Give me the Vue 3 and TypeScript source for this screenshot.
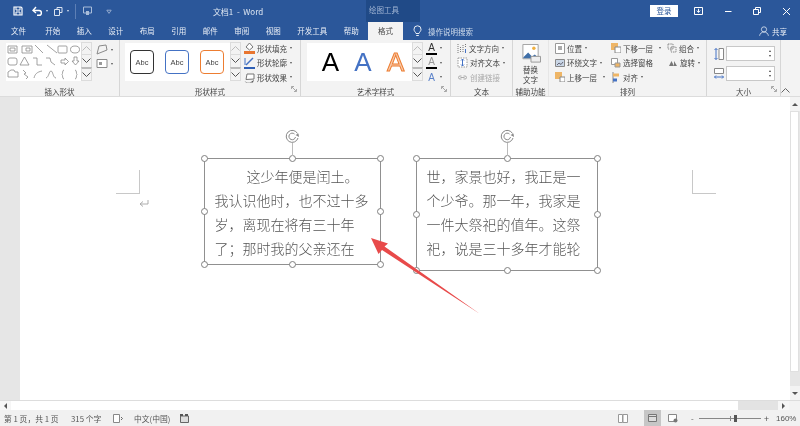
<script setup lang="ts">
const tabs = ["开始", "插入", "设计", "布局", "引用", "邮件", "审阅", "视图", "开发工具", "帮助"];
const abcs = ["dark", "blue", "orange"];
const box1 = ["这少年便是闰土。", "我认识他时，也不过十多", "岁，离现在将有三十年", "了；那时我的父亲还在"];
const box2 = ["世，家景也好，我正是一", "个少爷。那一年，我家是", "一件大祭祀的值年。这祭", "祀，说是三十多年才能轮"];
const scroll = ["up", "down", "more"];
const handles = ["tl", "tc", "tr", "ml", "mr", "bl", "bc", "br"];
</script>

<template>
  <div class="app">
    <header class="titlebar">
      <div class="quick">
        <svg width="10" height="10" viewBox="0 0 10 10"><path d="M1 1h7l1 1v7H1z" fill="none" stroke="#fff" stroke-width="1.2" /><path d="M3 1v3h4V1M3 9V6h4v3" fill="none" stroke="#fff" /></svg>
        <svg class="q-undo" width="11" height="10" viewBox="0 0 11 10"><path d="M2 4.5h5a2.4 2.4 0 0 1 0 4.8H5" fill="none" stroke="#fff" stroke-width="1.4" /><path d="M4 1L1 4.5 4 7" fill="none" stroke="#fff" stroke-width="1.4" /></svg>
        <i class="caret light"></i>
        <svg class="q-redo" width="11" height="11" viewBox="0 0 11 11"><path d="M1.5 3.5h5v6h-5zM4 3.5V1.5h5v5H6.5" fill="none" stroke="#dbe4f1" /></svg>
        <i class="caret light"></i>
        <span class="q-sep"></span>
        <svg class="q-touch" width="9" height="10" viewBox="0 0 9 10"><path d="M.5 1h8v6h-8z" fill="none" stroke="#a9bdd9" /><path d="M3 5h3v4H3z" fill="#a9bdd9" /></svg>
        <svg class="q-more" width="6" height="7" viewBox="0 0 6 7"><path d="M.8 2.2h4.4L3 5.4z" fill="none" stroke="#a9bdd9" stroke-width=".8" /></svg>
      </div>
      <div class="doc-title">文档1&nbsp; -&nbsp; Word</div>
      <div class="context">绘图工具</div>
      <button class="login">登录</button>
      <svg class="win first" width="9" height="8" viewBox="0 0 9 8"><path d="M.5.5h8v7h-8z" fill="none" stroke="#fff" /><path d="M4.5 1.8v3.6M2.8 3.6l1.7 1.8 1.7-1.8" fill="none" stroke="#fff" /></svg>
      <svg class="win" width="8" height="8" viewBox="0 0 8 8"><path d="M1 4.5h6.5" stroke="#fff" /></svg>
      <svg class="win" width="8" height="8" viewBox="0 0 8 8"><path d="M.5 2.5h5v5h-5zM2.5 2.5v-2h5v5h-2" fill="none" stroke="#fff" /></svg>
      <svg class="win" width="9" height="9" viewBox="0 0 9 9"><path d="M1 1l7 7M8 1L1 8" stroke="#fff" /></svg>
    </header>

    <nav class="tabs">
      <span class="tab file">文件</span>
      <span v-for="t in tabs" :key="t" class="tab">{{ t }}</span>
      <span class="tab active">格式</span>
      <svg class="bulb" width="9" height="12" viewBox="0 0 9 12"><path d="M3 8.5C2.6 7 1 6.3 1 4.3a3.5 3.5 0 0 1 7 0C8 6.3 6.4 7 6 8.5zM3.2 10.5h2.6" fill="none" stroke="#fff" stroke-width=".9" /></svg>
      <span class="search">操作说明搜索</span>
      <span class="grow"></span>
      <svg class="person" width="10" height="10" viewBox="0 0 10 10"><circle cx="5" cy="3.4" r="2.6" fill="none" stroke="#dfe7f2" stroke-width=".8" /><path d="M.6 9.8c.4-2.4 2-3.8 4.4-3.8s4 1.4 4.4 3.8" fill="none" stroke="#dfe7f2" stroke-width=".8" /></svg>
      <span class="share">共享</span>
    </nav>

    <section class="ribbon">
      <div class="group g-shapes">
        <div class="body">
          <svg class="gallery-shapes" width="75" height="38" viewBox="0 0 75 38" fill="none" stroke="#8a8a8a" stroke-width=".8">
            <path d="M2 3h9v7H2zM4 5h5v3H4zM16 3h10v7H16zM20 5h4v3h-4zM29 2l8 8M41 2l10 8" />
            <rect x="52" y="3" width="9" height="7" rx="1" /><ellipse cx="69" cy="6.5" rx="4.5" ry="3.5" />
            <rect x="2" y="15" width="9" height="7" rx="2" /><path d="M14 22l4.500-8 4.500 8zM27 15h4v7h5M40 15h4l1 4 4 3M55 17h4v-2l3.500 3.500-3.500 3.500v-2h-4zM68 14h3v4h2l-3.500 4-3.500-4h2z" />
            <path d="M2 34v-5l3-2h3l1 2h3v5zM17 27l3 3-2 1 4 3-2 2M28 35c1-4 3-6 8-7M40 35c3-1 3-7 5-7s2 7 5 7M58 27c-2 0-1 4-2 4.500 1 .5 0 4.500 2 4.500M69 27c2 0 1 4 2 4.500-1 .5 0 4.500-2 4.500" />
          </svg>
          <div class="scroller">
            <span v-for="s in scroll" :key="s" class="sbtn" :class="s">
              <svg width="9" height="5" viewBox="0 0 9 5"><path :d="s === 'up' ? 'M.5 4.500L4.500.5l4 4' : 'M.5.5l4 4 4-4'" fill="none" :stroke="s === 'up' ? '#bbb' : '#555'" /></svg>
            </span>
          </div>
          <div class="edit-shape">
            <div class="mini">
              <svg width="12" height="11" viewBox="0 0 12 11"><path d="M1 10l2-8 7-1 1 5-5 2z" fill="none" stroke="#8a8a8a" /></svg><i class="caret"></i>
            </div>
            <div class="mini">
              <svg width="12" height="11" viewBox="0 0 12 11"><path d="M1 1.500h10v8H1z" fill="#fff" stroke="#8a8a8a" /><path d="M3 4h3v3H3z" fill="#999" /></svg><i class="caret"></i>
            </div>
          </div>
        </div>
        <div class="label">插入形状</div>
      </div>

      <div class="group g-styles">
        <div class="body">
          <div class="gallery abc-row">
            <span v-for="a in abcs" :key="a" class="abc" :class="a">Abc</span>
          </div>
          <div class="scroller">
            <span v-for="s in scroll" :key="s" class="sbtn" :class="s">
              <svg width="9" height="5" viewBox="0 0 9 5"><path :d="s === 'up' ? 'M.5 4.500L4.500.5l4 4' : 'M.5.5l4 4 4-4'" fill="none" :stroke="s === 'up' ? '#bbb' : '#555'" /></svg>
            </span>
          </div>
          <div class="cmds styles-cmds">
            <div class="cmd">
              <svg width="11" height="12" viewBox="0 0 11 12"><path d="M5.500 1L9 5 5.500 8 2 5z" fill="#fff" stroke="#777" /><path d="M0 9h11v3H0z" fill="#e8752f" /></svg>
              <span>形状填充</span><i class="caret"></i>
            </div>
            <div class="cmd">
              <svg width="11" height="12" viewBox="0 0 11 12"><path d="M2 8l7-7" stroke="#4472c4" stroke-width="1.500" /><path d="M0 10h11v2H0z" fill="#2f5fb5" /><path d="M1 1v7" stroke="#4472c4" /></svg>
              <span>形状轮廓</span><i class="caret"></i>
            </div>
            <div class="cmd">
              <svg width="11" height="11" viewBox="0 0 11 11"><path d="M2 7.500l1-5.500h7v5z" fill="#fff" stroke="#777" /><path d="M.5 9c2 2 7 2 9.500-1.500l-1 3H2z" fill="#555" /></svg>
              <span>形状效果</span><i class="caret"></i>
            </div>
          </div>
        </div>
        <div class="label">形状样式</div>
        <svg class="launch" width="6" height="6" viewBox="0 0 6 6"><path d="M.5 3V.5H3M1 1l4 4M5.500 3v2.500H3" fill="none" stroke="#888" stroke-width=".7" /></svg>
      </div>

      <div class="group g-art">
        <div class="body">
          <div class="gallery art-row">
            <span class="art black">A</span>
            <span class="art blue">A</span>
            <span class="art orange">A</span>
          </div>
          <div class="scroller">
            <span v-for="s in scroll" :key="s" class="sbtn" :class="s">
              <svg width="9" height="5" viewBox="0 0 9 5"><path :d="s === 'up' ? 'M.5 4.500L4.500.5l4 4' : 'M.5.5l4 4 4-4'" fill="none" :stroke="s === 'up' ? '#bbb' : '#555'" /></svg>
            </span>
          </div>
          <div class="cmds art-cmds">
            <div class="cmd"><span class="a-btn k">A</span><i class="caret"></i></div>
            <div class="cmd"><span class="a-btn o">A</span><i class="caret"></i></div>
            <div class="cmd"><span class="a-btn e">A</span><i class="caret"></i></div>
          </div>
        </div>
        <div class="label">艺术字样式</div>
        <svg class="launch" width="6" height="6" viewBox="0 0 6 6"><path d="M.5 3V.5H3M1 1l4 4M5.500 3v2.500H3" fill="none" stroke="#888" stroke-width=".7" /></svg>
      </div>

      <div class="group g-text">
        <div class="body">
          <div class="cmds">
            <div class="cmd">
              <svg width="10" height="11" viewBox="0 0 10 11"><path d="M1 1v9M3.500 4v6M6 2v8M8.500 1v3" stroke="#777" stroke-dasharray="1 1" /><path d="M8.500 6v4" stroke="#4472c4" /></svg>
              <span>文字方向</span><i class="caret"></i>
            </div>
            <div class="cmd">
              <svg width="11" height="11" viewBox="0 0 11 11"><path d="M1 1h9v9H1z" fill="#fff" stroke="#999" stroke-dasharray="1.500 1" /><path d="M5.500 2v7M4 3.500L5.500 2 7 3.500M4 7.500L5.500 9 7 7.500" fill="none" stroke="#4472c4" /></svg>
              <span>对齐文本</span><i class="caret"></i>
            </div>
            <div class="cmd disabled">
              <svg width="11" height="11" viewBox="0 0 11 11"><path d="M4.500 4H3a1.500 1.500 0 0 0 0 3h1.500M6.500 4H8a1.500 1.500 0 0 1 0 3H6.500M3.500 5.500h4" fill="none" stroke="#aaa" /></svg>
              <span>创建链接</span>
            </div>
          </div>
        </div>
        <div class="label">文本</div>
      </div>

      <div class="group g-alt">
        <div class="body alt-body">
          <svg width="20" height="21" viewBox="0 0 20 21"><path d="M1.500.5h16v15h-16z" fill="#fff" stroke="#a0a0a0" /><path d="M2 14l5-5 4 4 3-2 3 3v1H2z" fill="#3f6fa8" /><circle cx="13" cy="4.500" r="1.800" fill="#f0b040" /><path d="M10 13h10v6H10z" fill="#eee" stroke="#999" /></svg>
          <span class="alt-text">替换<br />文字</span>
        </div>
        <div class="label">辅助功能</div>
      </div>

      <div class="group g-arrange">
        <div class="body arrange">
          <div class="cmds col1">
            <div class="cmd">
              <svg width="10" height="11" viewBox="0 0 10 11"><path d="M.5.5h9v10h-9z" fill="#fff" stroke="#999" /><path d="M3 3h4v4H3z" fill="#aaa" /></svg>
              <span>位置</span><i class="caret"></i>
            </div>
            <div class="cmd">
              <svg width="10" height="10" viewBox="0 0 10 10"><path d="M.5 1.500h9v7h-9z" fill="#c9d6e6" stroke="#888" /><path d="M2 7l2-2 2 1.500L8 4" fill="none" stroke="#667" /></svg>
              <span>环绕文字</span><i class="caret"></i>
            </div>
            <div class="cmd">
              <svg width="10" height="10" viewBox="0 0 10 10"><path d="M0 0h7v7H0z" fill="#eeb566" /><path d="M5 5h5v5H5z" fill="#fff" stroke="#888" /></svg>
              <span>上移一层</span><i class="caret far"></i>
            </div>
          </div>
          <div class="cmds col2">
            <div class="cmd">
              <svg width="10" height="10" viewBox="0 0 10 10"><path d="M0 0h7v7H0z" fill="#eeb566" /><path d="M4 4h6v6H4z" fill="#fff" stroke="#888" /></svg>
              <span>下移一层</span><i class="caret far"></i>
            </div>
            <div class="cmd">
              <svg width="10" height="10" viewBox="0 0 10 10"><path d="M.5.5h6v6h-6z" fill="#fff" stroke="#999" /><path d="M4 5h5v4H4z" fill="#eeb566" stroke="#999" /></svg>
              <span>选择窗格</span>
            </div>
            <div class="cmd">
              <svg width="10" height="11" viewBox="0 0 10 11"><path d="M2 0v11" stroke="#888" /><path d="M2 1.500h6v3H2z" fill="#eeb566" /><path d="M2 6.500h4v3H2z" fill="#4472c4" /></svg>
              <span>对齐</span><i class="caret"></i>
            </div>
          </div>
          <div class="cmds col3">
            <div class="cmd">
              <svg width="10" height="10" viewBox="0 0 10 10"><path d="M1 1h5v5H1zM4 4h5v5H4z" fill="none" stroke="#888" stroke-dasharray="1.500 .8" /></svg>
              <span>组合</span><i class="caret"></i>
            </div>
            <div class="cmd rot">
              <svg width="10" height="9" viewBox="0 0 10 9"><path d="M1 8l2.500-5L6 8zM6 3l3 5H6" fill="#777" /></svg>
              <span>旋转</span><i class="caret"></i>
            </div>
          </div>
        </div>
        <div class="label">排列</div>
      </div>

      <div class="group g-size">
        <div class="body size-body">
          <div class="size-row">
            <svg width="10" height="12" viewBox="0 0 10 12"><path d="M5 .5h4.500v11H5z" fill="#fff" stroke="#888" /><path d="M2 .5v11M.5 2L2 .5 3.500 2M.5 10L2 11.500 3.500 10" fill="none" stroke="#4472c4" /></svg>
            <div class="spin"><span class="arrows"><i class="sup"></i><i class="sdn"></i></span></div>
          </div>
          <div class="size-row">
            <svg width="10" height="12" viewBox="0 0 10 12"><path d="M.5.5h9v5h-9z" fill="#fff" stroke="#888" /><path d="M.5 9h9M2 7.500L.5 9 2 10.500M8 7.500L9.500 9 8 10.500" fill="none" stroke="#4472c4" /></svg>
            <div class="spin"><span class="arrows"><i class="sup"></i><i class="sdn"></i></span></div>
          </div>
        </div>
        <div class="label">大小</div>
        <svg class="launch" width="6" height="6" viewBox="0 0 6 6"><path d="M.5 3V.5H3M1 1l4 4M5.500 3v2.500H3" fill="none" stroke="#888" stroke-width=".7" /></svg>
      </div>

      <svg class="collapse" width="9" height="5" viewBox="0 0 9 5"><path d="M.5 4.500l4-4 4 4" fill="none" stroke="#666" /></svg>
    </section>

    <main class="workspace">
      <div class="gutter"></div>
      <div class="page">
        <i class="crop left"></i>
        <i class="crop right"></i>
        <svg class="para" width="10" height="9" viewBox="0 0 10 9"><path d="M9 1v4H1.500M4 2.500L1 5l3 2.500" fill="none" stroke="#999" stroke-width=".8" /></svg>

        <div class="shape s1">
          <p v-for="(l, i) in box1" :key="l" :class="{ indent: i === 0 }">{{ l }}</p>
          <i v-for="h in handles" :key="h" class="handle" :class="h"></i>
          <i class="stem"></i>
          <svg class="rotate" width="15" height="15" viewBox="0 0 15 15"><path d="M12.500 4.500A6 6 0 1 0 13 9M9.500 5A3.300 3.300 0 1 0 10.500 8" fill="none" stroke="#888" stroke-width="1" /><path d="M10.500 6l3-1.500.5 3.500z" fill="#888" /></svg>
        </div>

        <div class="shape s2">
          <p v-for="l in box2" :key="l">{{ l }}</p>
          <i v-for="h in handles" :key="h" class="handle" :class="h"></i>
          <i class="stem"></i>
          <svg class="rotate" width="15" height="15" viewBox="0 0 15 15"><path d="M12.500 4.500A6 6 0 1 0 13 9M9.500 5A3.300 3.300 0 1 0 10.500 8" fill="none" stroke="#888" stroke-width="1" /><path d="M10.500 6l3-1.500.5 3.500z" fill="#888" /></svg>
        </div>

        <svg class="arrow" width="120" height="90" viewBox="0 0 120 90">
          <path d="M1 1L18 6.500 14.500 9.500 110 77 12 13 8.500 17z" fill="#e84a4a" />
        </svg>
      </div>
      <div class="vscroll">
        <span class="vbtn"><i class="tri-up"></i></span>
        <span class="vthumb"></span>
        <span class="vbtn"><i class="tri-down"></i></span>
      </div>
    </main>

    <div class="hscroll">
      <span class="hbtn"><i class="tri-left"></i></span>
      <span class="hthumb"></span>
      <span class="htrack"></span>
      <span class="hbtn"><i class="tri-right"></i></span>
      <span class="hend"></span>
    </div>

    <footer class="status">
      <span class="st-page">第 1 页，共 1 页</span>
      <span class="st-words">315 个字</span>
      <svg class="st-ic1" width="10" height="9" viewBox="0 0 10 9"><path d="M.5.5h6v8h-6z" fill="#fff" stroke="#888" /><path d="M8 3l1.500 1.500L8 6" fill="none" stroke="#666" /></svg>
      <span class="st-lang">中文(中国)</span>
      <svg class="st-ic2" width="9" height="9" viewBox="0 0 9 9"><path d="M.5 2h8v6.500h-8z" fill="#ddd" stroke="#666" /><path d="M0 0h3v2H0zM5 0h3v2H5z" fill="#555" /></svg>
      <span class="grow"></span>
      <svg class="st-read" width="10" height="9" viewBox="0 0 10 9"><path d="M.5.5h4v8h-4zM5 .5h4.500v8H5z" fill="#fff" stroke="#999" /></svg>
      <span class="st-print"><svg width="9" height="8" viewBox="0 0 9 8"><path d="M.5.5h8v7h-8z" fill="#ddd" stroke="#777" /><path d="M0 2.500h9" stroke="#777" /></svg></span>
      <svg class="st-web" width="10" height="9" viewBox="0 0 10 9"><path d="M.5.5h8v7h-8z" fill="#fff" stroke="#888" /><circle cx="7.500" cy="6.500" r="2" fill="#777" /></svg>
      <span class="st-minus">-</span>
      <span class="slider"><i class="tick"></i><i class="knob"></i></span>
      <span class="st-plus">+</span>
      <span class="st-zoom">160%</span>
    </footer>
  </div>
</template>

<style>
html, body { margin: 0; overflow: hidden; }
</style>

<style scoped>
.app {
  width: 800px;
  height: 426px;
  display: flex;
  flex-direction: column;
  font-family: "Noto Sans CJK SC", "Liberation Sans", sans-serif;
  font-size: 7.5px;
  color: #444;
  background: #fff;
  overflow: hidden;
  filter: blur(0.35px);
}
.grow { flex: 1; }
.caret { display: inline-block; width: 0; height: 0; border: 1.5px solid transparent; border-top: 2px solid #555; border-bottom: 0; margin-left: 3px; }
.caret.light { border-top-color: #dbe4f1; }

.titlebar { height: 22px; flex: none; background: #2b579a; display: flex; align-items: center; color: #fff; }
.quick { width: 180px; display: flex; align-items: center; padding-left: 13px; box-sizing: border-box; }
.q-undo { margin-left: 9px; }
.q-redo { margin-left: 5px; }
.q-sep { width: 1px; height: 15px; background: #5d7fb5; margin-left: 6px; }
.q-touch { margin-left: 7px; }
.q-more { margin-left: 14px; }
.doc-title { width: 186px; padding-right: 70px; box-sizing: border-box; text-align: center; font-size: 8px; color: #dfe7f2; white-space: nowrap; }
.context { width: 54px; height: 22px; background: #204a87; line-height: 20px; padding-left: 3px; box-sizing: border-box; color: #9fb4d3; }
.login { margin-left: 230px; width: 28px; height: 12px; padding: 0; border: 0; background: #fff; color: #2b579a; font: 7.5px "Noto Sans CJK SC", sans-serif; line-height: 12px; }
.win { margin-left: 21px; }
.win.first { margin-left: 16px; }

.tabs { height: 18px; flex: none; background: #2b579a; display: flex; align-items: center; color: #fff; }
.tab { padding: 0 8.25px; line-height: 18px; color: #e9eef6; }
.tab.file { width: 37px; padding: 0 0 0 11px; box-sizing: border-box; }
.tab.active { background: #f3f3f3; color: #444; padding: 0 10px; margin-left: 1px; }
.bulb { margin-left: 10px; }
.search { margin-left: 6px; color: #d0dcec; }
.person { margin-right: 3px; }
.share { margin-right: 13px; color: #e9eef6; }

.ribbon { height: 57px; flex: none; background: #f3f3f3; display: flex; position: relative; border-bottom: 1px solid #dcdcdc; box-sizing: border-box; }
.group { position: relative; display: flex; flex-direction: column; box-sizing: border-box; border-right: 1px solid #d6d6d6; }
.body { height: 44px; flex: none; padding-top: 3px; display: flex; box-sizing: border-box; }
.label { height: 12px; flex: none; text-align: center; line-height: 16px; font-size: 7.5px; color: #444; }
.launch { position: absolute; right: 3px; bottom: 4px; }
.g-shapes { width: 120px; }
.g-styles { width: 181px; }
.g-art { width: 150px; }
.g-text { width: 62px; }
.g-alt { width: 36px; border-right-color: #e6e6e6; }
.g-arrange { width: 158px; }
.g-size { width: 74px; }
.g-shapes .body { padding-left: 6px; }
.g-styles .body { padding-left: 5px; }
.g-art .body { padding-left: 6px; }
.gallery-shapes { background: #fff; flex: none; }
.gallery { background: #fff; display: flex; height: 38px; width: 105px; box-sizing: border-box; }
.scroller { width: 11px; height: 38px; display: flex; flex-direction: column; flex: none; }
.sbtn { flex: 1; display: flex; align-items: center; justify-content: center; border: 1px solid #dcdcdc; margin-top: -1px; }
.sbtn.more { border-top: 2px solid #bbb; }
.edit-shape { margin-left: 4px; display: flex; flex-direction: column; gap: 1px; }
.mini { display: flex; align-items: center; height: 13px; }
.abc-row { align-items: center; padding-left: 5px; gap: 11px; }
.abc { width: 24px; height: 24px; box-sizing: border-box; border: 1px solid; border-radius: 4px; display: flex; align-items: center; justify-content: center; font: 7.5px "Liberation Sans", sans-serif; color: #444; }
.abc.dark { border-color: #333; }
.abc.blue { border-color: #4472c4; }
.abc.orange { border-color: #ed7d31; }
.cmds { display: flex; flex-direction: column; margin-top: -2px; }
.cmd { height: 14.500px; flex: none; display: flex; align-items: center; white-space: nowrap; }
.cmd svg { flex: none; margin-right: 2px; }
.cmd.disabled { color: #aaa; }
.styles-cmds { margin-left: 3px; }
.art-row { align-items: center; padding-left: 7px; }
.art { width: 37px; text-align: center; font: 26px/38px "Liberation Sans", sans-serif; }
.art.black { color: #000; }
.art.blue { color: #4472c4; }
.art.orange { color: #f8cbad; -webkit-text-stroke: 1px #ed7d31; }
.art-cmds { margin-left: 3px; }
.a-btn { width: 11px; text-align: center; font: 10px/11px "Liberation Sans", sans-serif; border-bottom: 2px solid #000; height: 11px; color: #333; }
.a-btn.o { color: #999; }
.a-btn.e { border-bottom: 0; color: #5b82c9; }
.g-text .body { padding-left: 6px; }
.alt-body { flex-direction: column; align-items: center; padding-top: 4px; }
.alt-text { line-height: 9.500px; text-align: center; margin-top: 1px; }
.arrange { padding-left: 6px; }
.col1 { width: 56px; }
.col2 { width: 56px; }
.caret.far { margin-left: 6px; }
.rot { padding-left: 1px; }
.size-body { flex-direction: column; gap: 5px; padding: 6px 0 0 7px; }
.size-row { display: flex; align-items: center; gap: 2px; }
.spin { width: 49px; height: 15px; background: #fff; border: 1px solid #c8c8c8; box-sizing: border-box; position: relative; }
.arrows { position: absolute; right: 3px; top: 3px; display: flex; flex-direction: column; gap: 3px; }
.sup { width: 0; height: 0; border: 1.5px solid transparent; border-bottom: 2px solid #444; border-top: 0; }
.sdn { width: 0; height: 0; border: 1.5px solid transparent; border-top: 2px solid #444; border-bottom: 0; }
.collapse { position: absolute; right: 10px; bottom: 3px; }

.workspace { flex: 1; display: flex; min-height: 0; }
.gutter { width: 20px; background: #e6e6e6; }
.page { flex: 1; background: #fff; position: relative; }
.crop { position: absolute; width: 23px; height: 23px; top: 73px; border-bottom: 1px solid #c8c8c8; }
.crop.left { left: 96px; border-right: 1px solid #c8c8c8; }
.crop.right { left: 672px; border-left: 1px solid #c8c8c8; }
.para { position: absolute; left: 119px; top: 102px; }

.shape { position: absolute; box-sizing: border-box; border: 1.5px solid #909090; padding: 4.500px 0 0 9.500px; font-size: 14px; line-height: 24.300px; color: #555; font-weight: 300; white-space: nowrap; }
.shape p { margin: 0; }
.shape p.indent { padding-left: 32px; }
.s1 { left: 184px; top: 61px; width: 177px; height: 107px; }
.s2 { left: 396px; top: 61px; width: 182px; height: 113px; }
.handle { position: absolute; width: 7px; height: 7px; box-sizing: border-box; border: 1px solid #808080; border-radius: 50%; background: #fff; }
.tl, .tc, .tr { top: -4px; }
.bl, .bc, .br { bottom: -4px; }
.ml, .mr { top: calc(50% - 3.500px); }
.tl, .ml, .bl { left: -4px; }
.tr, .mr, .br { right: -4px; }
.tc, .bc { left: calc(50% - 3.500px); }
.stem { position: absolute; left: calc(50% - .5px); top: -16px; width: 1px; height: 13px; background: #bbb; }
.rotate { position: absolute; left: calc(50% - 7.500px); top: -30px; }
.arrow { position: absolute; left: 350px; top: 140px; }

.vscroll { width: 10px; background: #e6e6e6; display: flex; flex-direction: column; }
.vbtn { height: 14px; display: flex; align-items: center; justify-content: center; background: #f3f3f3; }
.vthumb { flex: 1; background: #fff; margin: 0 1px 14px 0; border: 1px solid #e0e0e0; box-sizing: border-box; }
.tri-up { width: 0; height: 0; border: 3px solid transparent; border-bottom: 3px solid #555; border-top: 0; }
.tri-down { width: 0; height: 0; border: 3px solid transparent; border-top: 3px solid #555; border-bottom: 0; }
.tri-left { width: 0; height: 0; border: 3px solid transparent; border-right: 3px solid #555; border-left: 0; }
.tri-right { width: 0; height: 0; border: 3px solid transparent; border-left: 3px solid #555; border-right: 0; }

.hscroll { height: 9px; flex: none; display: flex; background: #f3f3f3; border-top: 1px solid #ddd; }
.hbtn { width: 11px; display: flex; align-items: center; justify-content: center; background: #f6f6f6; }
.hthumb { width: 727px; background: #fff; }
.htrack { width: 40px; background: #e3e3e3; }
.hend { width: 11px; }

.status { height: 16px; flex: none; background: #f1f1f1; display: flex; align-items: center; color: #555; font-size: 7.800px; }
.st-page { margin-left: 4px; width: 67px; }
.st-words { width: 42px; }
.st-lang { margin-left: 11px; width: 46px; }
.st-read { margin-right: 16px; }
.st-print { width: 17px; height: 16px; background: #c6c6c6; display: flex; align-items: center; justify-content: center; }
.st-web { margin-left: 7px; margin-right: 13px; }
.st-minus { width: 8px; }
.slider { width: 62px; height: 1px; background: #888; position: relative; }
.tick { position: absolute; left: 31px; top: -2px; width: 1px; height: 5px; background: #888; }
.knob { position: absolute; left: 35px; top: -3px; width: 3px; height: 7px; background: #555; }
.st-plus { margin-left: 3px; width: 12px; font-size: 9px; }
.st-zoom { width: 24px; font-size: 8px; font-family: "Liberation Sans", sans-serif; }
</style>
